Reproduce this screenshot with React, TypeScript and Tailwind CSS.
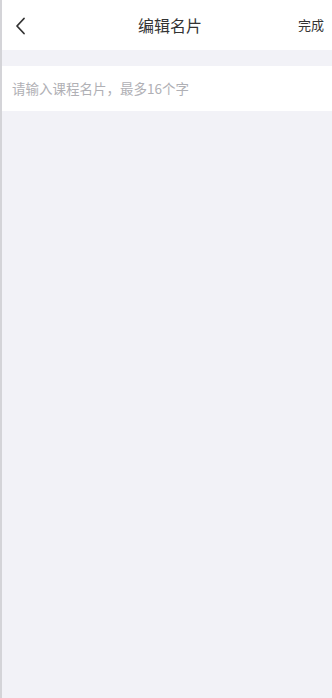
export default function App() {
  return (
    <div
      className="flex h-[698px] w-[332px] flex-col border-l-2 border-[#d4d4d8] bg-[#f2f2f7]"
      style={{ fontFamily: '"Noto Sans CJK SC", "Noto Sans", sans-serif' }}
    >
      <header className="flex h-[50px] items-center justify-between bg-white pl-[12px] pr-[8px]">
        <svg width="14" height="18" viewBox="0 0 14 18" fill="none" className="mt-[1px]">
          <path d="M10 1.5 L3 9 L10 16.5" stroke="#333" strokeWidth="1.8" strokeLinecap="round" strokeLinejoin="round" />
        </svg>
        <h1 className="ml-[14px] text-[16px] font-normal text-[#333]">编辑名片</h1>
        <button className="text-[13px] text-[#333]">完成</button>
      </header>
      <div className="h-[16px]" />
      <div className="flex h-[45px] items-center bg-white px-[10px]">
        <input
          className="w-full bg-transparent text-[13.5px] text-[#333] outline-none placeholder:text-[#b0b0b5]"
          placeholder="请输入课程名片，最多16个字"
        />
      </div>
    </div>
  );
}
